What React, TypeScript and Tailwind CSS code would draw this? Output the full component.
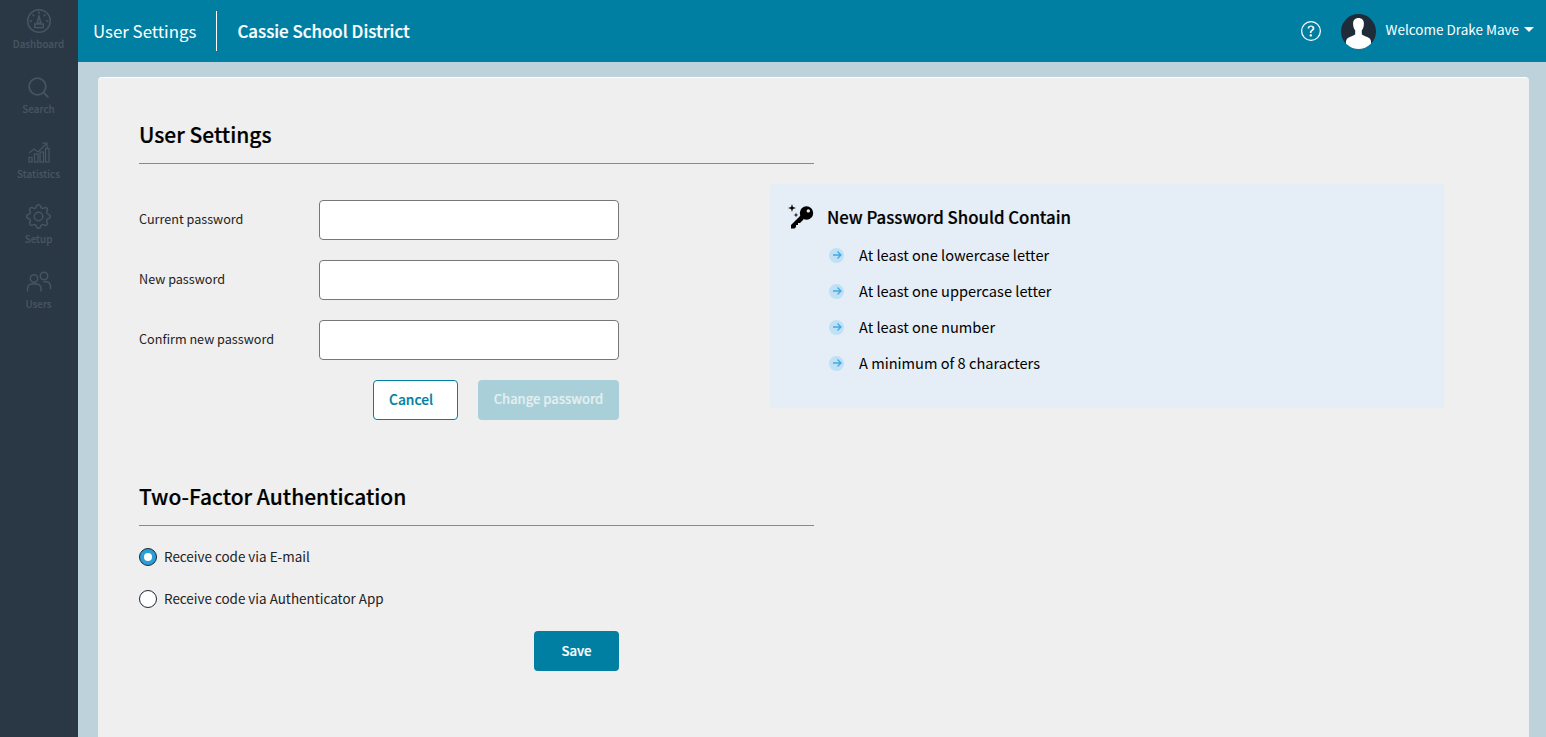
import { Search } from 'lucide-react';
import { BsGear, BsQuestionCircle } from 'react-icons/bs';

const font = { fontFamily: '"Noto Sans CJK SC", "Noto Sans", sans-serif' };

function DashboardIcon() {
  return (
    <svg width="26" height="26" viewBox="0 1 26 26" fill="none" stroke="currentColor" strokeWidth="1.500">
      <circle cx="13" cy="13" r="11.300" />
      <path d="M13 3.500v2.500M6.500 6.500l1.700 1.700M19.500 6.500l-1.700 1.700M3.500 13H6M22.500 13H20" />
      <path d="M13 7.500l1.800 7.500h-3.600z" />
      <rect x="8.700" y="16" width="8.600" height="3.600" />
    </svg>
  );
}

function StatisticsIcon() {
  return (
    <svg width="22" height="22" viewBox="0 0 22 22" fill="none" stroke="currentColor" strokeWidth="1.300">
      <path d="M1 12l5-4 4 3 8-8" />
      <path d="M14.500 2.200H19V7" />
      <rect x="1" y="16.500" width="3" height="4.500" />
      <rect x="6.500" y="13" width="3.500" height="8" />
      <rect x="12" y="11" width="3.500" height="10" />
      <rect x="17.500" y="7.500" width="3.500" height="13.500" />
    </svg>
  );
}

function UsersIcon() {
  return (
    <svg width="26" height="22" viewBox="0 0 26 22" fill="none" stroke="currentColor" strokeWidth="1.500">
      <circle cx="8" cy="7.500" r="3.700" />
      <circle cx="18" cy="5" r="3.700" />
      <path d="M1.500 20.500v-2.500c0-3 2-5 5-5h3.500c3 0 5 2 5 5v2.500" />
      <path d="M17.500 10.800h2c3 0 5 2 5 5v2.500" />
    </svg>
  );
}

function KeyIcon() {
  return (
    <svg width="26" height="26" viewBox="0 0 26 26" fill="currentColor">
      <path
        fillRule="evenodd"
        d="M18.500 2.300a6.700 6.700 0 1 1 0 13.400 6.700 6.700 0 0 1 0-13.400zM20.300 5.200a1.700 1.700 0 1 0 0 3.400 1.700 1.700 0 0 0 0-3.400z"
      />
      <path d="M14 10l-11 11v3.500h3.500l1.500-1.500v-2h2v-2h2l3.500-3.500z" />
      <path d="M4 0l.9 3.100L8 4l-3.100.9L4 8l-.9-3.100L0 4l3.100-.9zM8 8.500l.6 1.900 1.900.6-1.900.6L8 13.500l-.6-1.900-1.900-.6 1.900-.6z" />
    </svg>
  );
}

function Avatar() {
  return (
    <svg width="35" height="35" viewBox="0 0 35 35" className="shrink-0">
      <circle cx="17.500" cy="17.500" r="17.500" fill="#1f2b38" />
      <clipPath id="avatar-clip">
        <circle cx="17.500" cy="17.500" r="17.500" />
      </clipPath>
      <g clipPath="url(#avatar-clip)" fill="#fff">
        <path d="M17.500 4c3.400 0 5.600 2.400 5.400 6-.1 2.600-.9 5-2.100 6.300v3.700c0 1 3.500 2.200 5.900 3.200 2 .9 3 2 3.300 4v9H5v-9c.3-2 1.300-3.100 3.300-4 2.400-1 5.900-2.200 5.900-3.200v-3.700c-1.200-1.300-2-3.700-2.100-6.300-.2-3.600 2-6 5.400-6z" />
      </g>
    </svg>
  );
}

function NavItem({ icon, label }: { icon: React.ReactNode; label: string }) {
  return (
    <div className="flex h-[65px] flex-col items-center pt-[9px] pr-px text-[#465562]">
      <div className="flex h-[26px] items-center justify-center">{icon}</div>
      <span className="mt-[2px] text-[9.900px] leading-[14px] font-medium [-webkit-text-stroke:0.2px]">{label}</span>
    </div>
  );
}

function Field({ label }: { label: string }) {
  return (
    <div className="flex h-10 items-center">
      <label className="w-[180px] -translate-y-px text-[12.640px] leading-5 text-[#222]">{label}</label>
      <input type="text" className="h-10 w-[300px] rounded border border-[#777] bg-white" />
    </div>
  );
}

function Rule({ text }: { text: string }) {
  return (
    <li className="flex h-9 items-center pl-[59px] text-[14.600px] text-black">
      <span className="mr-[15px] flex h-[15px] w-[15px] items-center justify-center rounded-full bg-[#bfe0f5] text-[#3fa9e8]">
        <svg width="10" height="10" viewBox="0 0 10 10" fill="none" stroke="currentColor" strokeWidth="1.300">
          <path d="M1 5h8M5.500 1.500L9 5l-3.500 3.500" />
        </svg>
      </span>
      {text}
    </li>
  );
}

function Radio({ checked, label }: { checked?: boolean; label: string }) {
  return (
    <div className="flex h-[18px] items-center">
      <span
        className={
          checked
            ? 'mr-[7px] flex h-[18px] w-[18px] items-center justify-center rounded-full border-[1.5px] border-[#1c2833] bg-[#2a9fd6]'
            : 'mr-[7px] h-[18px] w-[18px] rounded-full border-[1.5px] border-[#1c2833] bg-white'
        }
      >
        {checked && <span className="h-2 w-2 rounded-full bg-white" />}
      </span>
      <span className="-translate-y-px text-[13.450px] leading-5 text-[#222]">{label}</span>
    </div>
  );
}

export default function App() {
  return (
    <div className="flex h-[737px] overflow-hidden bg-[#bed2db]" style={font}>
      {/* Sidebar */}
      <aside className="w-[78px] shrink-0 bg-[#2a3744]">
        <NavItem icon={<DashboardIcon />} label="Dashboard" />
        <NavItem icon={<Search size={25} strokeWidth={1.7} />} label="Search" />
        <NavItem icon={<StatisticsIcon />} label="Statistics" />
        <NavItem icon={<BsGear size={25} className="-translate-y-px" />} label="Setup" />
        <NavItem icon={<UsersIcon />} label="Users" />
      </aside>

      <div className="flex min-w-0 flex-1 flex-col">
        {/* Header */}
        <header className="flex h-[62px] shrink-0 items-center bg-[#007fa3] pr-3 pl-[15px] text-white">
          <span className="text-[16.850px] leading-6">User Settings</span>
          <span className="mx-5 h-10 w-px bg-white" />
          <span className="text-[16.900px] leading-6 font-medium [-webkit-text-stroke:0.2px]">Cassie School District</span>
          <div className="ml-auto flex items-center">
            <BsQuestionCircle size={20} />
            <div className="ml-5">
              <Avatar />
            </div>
            <div className="flex -translate-y-0.5 items-center">
              <span className="ml-[10px] text-[13.500px] leading-5">Welcome Drake Mave</span>
              <span className="ml-[5px] h-0 w-0 border-x-[5px] border-t-[5px] border-x-transparent border-t-white" />
            </div>
          </div>
        </header>

        {/* Content */}
        <main className="flex-1 pt-[15px] pr-[17px] pl-5">
          <div className="h-full rounded-t border-t border-white bg-[#efefef] px-[41px] pt-[42px]">
            <section>
              <h2 className="w-[675px] border-b border-[#8a8a8a] pb-[13px] text-[21px] leading-[30px] font-medium text-black [-webkit-text-stroke:0.2px]">
                <span className="block -translate-y-px">User Settings</span>
              </h2>
              <div className="flex">
                <form className="flex w-[480px] flex-col gap-5 pt-9">
                  <Field label="Current password" />
                  <Field label="New password" />
                  <Field label="Confirm new password" />
                  <div className="flex justify-end gap-5">
                    <button type="button" className="h-10 w-[85px] rounded border border-[#007fa3] bg-white pb-0.5 pl-[15px] text-left text-[13.800px] font-medium text-[#007fa3] [-webkit-text-stroke:0.2px]">
                      Cancel
                    </button>
                    <button type="button" className="h-10 w-[141px] rounded bg-[#a9cfd9] pb-0.5 text-[13px] font-medium text-[#e3eff2] [-webkit-text-stroke:0.2px]">
                      Change password
                    </button>
                  </div>
                </form>
                <div className="mt-5 ml-[151px] h-[224px] w-[674px] rounded bg-[#e5edf6]">
                  <div className="flex items-center pt-[20px] pl-[18px]">
                    <KeyIcon />
                    <h3 className="ml-[13px] text-[16.800px] leading-6 font-medium text-black [-webkit-text-stroke:0.2px]">New Password Should Contain</h3>
                  </div>
                  <ul className="mt-[7px]">
                    <Rule text="At least one lowercase letter" />
                    <Rule text="At least one uppercase letter" />
                    <Rule text="At least one number" />
                    <Rule text="A minimum of 8 characters" />
                  </ul>
                </div>
              </div>
            </section>

            <section className="mt-[62px] w-[675px]">
              <h2 className="border-b border-[#8a8a8a] pb-[13px] text-[21px] leading-[30px] font-medium text-black [-webkit-text-stroke:0.2px]">
                <span className="block -translate-y-px">Two-Factor Authentication</span>
              </h2>
              <div className="flex w-[480px] flex-col pt-[22px]">
                <Radio checked label="Receive code via E-mail" />
                <div className="mt-6">
                  <Radio label="Receive code via Authenticator App" />
                </div>
                <div className="mt-[23px] flex justify-end">
                  <button type="button" className="h-10 w-[85px] rounded bg-[#007fa3] pb-px text-[13.200px] font-medium text-white [-webkit-text-stroke:0.2px]">
                    Save
                  </button>
                </div>
              </div>
            </section>
          </div>
        </main>
      </div>
    </div>
  );
}
